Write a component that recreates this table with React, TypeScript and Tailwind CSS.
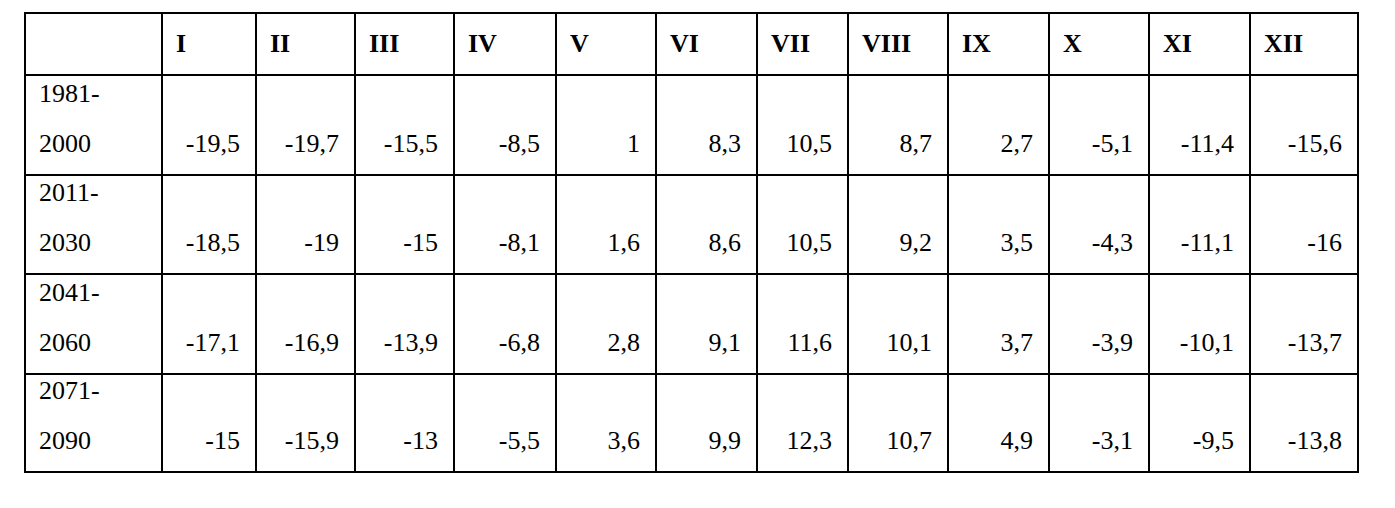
const months = ["I", "II", "III", "IV", "V", "VI", "VII", "VIII", "IX", "X", "XI", "XII"];

const widths = [
  "w-[137px]",
  "w-[94px]",
  "w-[99px]",
  "w-[99px]",
  "w-[102px]",
  "w-[100px]",
  "w-[101px]",
  "w-[91px]",
  "w-[100px]",
  "w-[101px]",
  "w-[100px]",
  "w-[101px]",
  "w-[108px]",
];

const rows = [
  { from: "1981-", to: "2000", h: "h-[100px]", vals: ["-19,5", "-19,7", "-15,5", "-8,5", "1", "8,3", "10,5", "8,7", "2,7", "-5,1", "-11,4", "-15,6"] },
  { from: "2011-", to: "2030", h: "h-[99px]", vals: ["-18,5", "-19", "-15", "-8,1", "1,6", "8,6", "10,5", "9,2", "3,5", "-4,3", "-11,1", "-16"] },
  { from: "2041-", to: "2060", h: "h-[100px]", vals: ["-17,1", "-16,9", "-13,9", "-6,8", "2,8", "9,1", "11,6", "10,1", "3,7", "-3,9", "-10,1", "-13,7"] },
  { from: "2071-", to: "2090", h: "h-[98px]", vals: ["-15", "-15,9", "-13", "-5,5", "3,6", "9,9", "12,3", "10,7", "4,9", "-3,1", "-9,5", "-13,8"] },
];

export default function App() {
  return (
    <div className="w-[1395px] h-[508px] bg-white pt-[12px] pl-[24px] text-black font-['Liberation_Serif',serif] text-[26px] leading-[30px]">
      <table className="table-fixed border-collapse w-[1335px]">
        <colgroup>
          {widths.map((w, i) => (
            <col key={i} className={w} />
          ))}
        </colgroup>
        <thead>
          <tr className="h-[62px]">
            <th className="border-2 border-black"></th>
            {months.map((m) => (
              <th key={m} className="border-2 border-black text-left font-bold align-middle pl-[13px]">
                {m}
              </th>
            ))}
          </tr>
        </thead>
        <tbody>
          {rows.map((r) => (
            <tr key={r.from} className={r.h}>
              <td className="border-2 border-black align-bottom pl-[13px] pb-[15px]">
                <div className="mb-[20px]">{r.from}</div>
                <div>{r.to}</div>
              </td>
              {r.vals.map((v, i) => (
                <td key={i} className="border-2 border-black align-bottom text-right pr-[15px] pb-[15px]">
                  {v}
                </td>
              ))}
            </tr>
          ))}
        </tbody>
      </table>
    </div>
  );
}
